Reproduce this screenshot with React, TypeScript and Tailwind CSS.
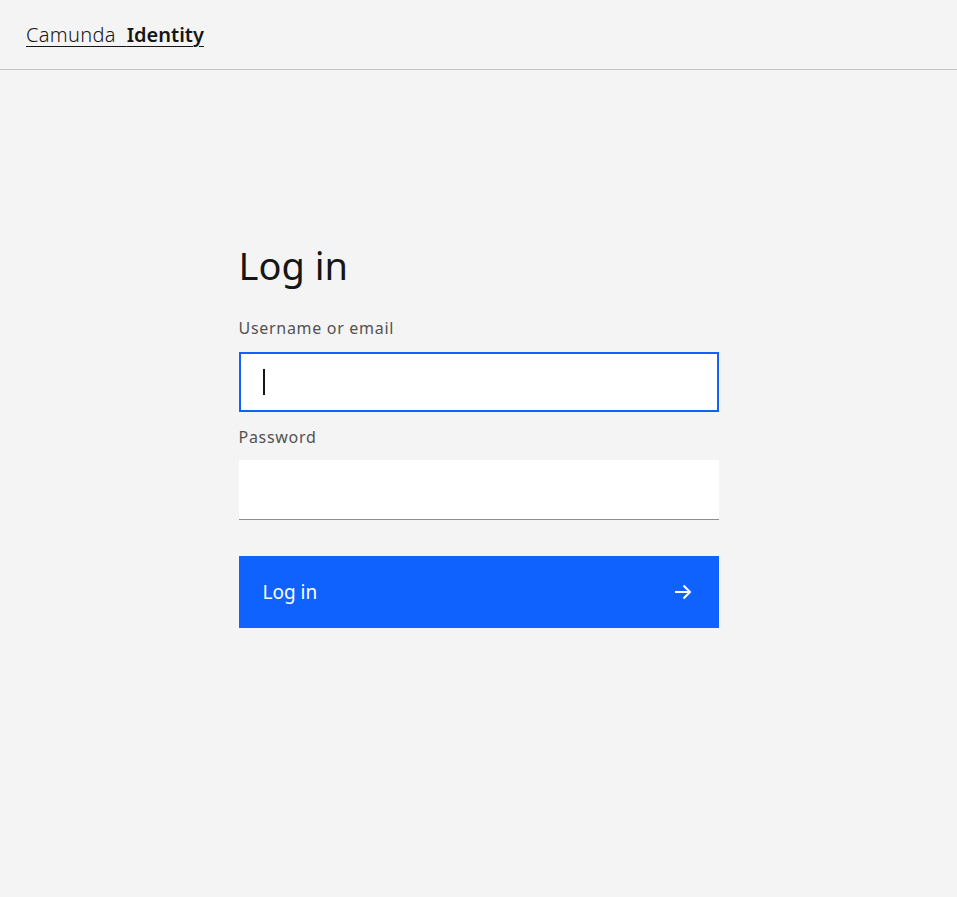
import React from "react";

export default function App() {
  return (
    <div className="min-h-screen w-full bg-[#f4f4f4] text-[#161616]" style={{ fontFamily: '"Noto Sans", "Open Sans", sans-serif' }}>
      <header className="h-[70px] border-b border-[#c6c6c6] flex items-center pl-[26px]">
        <a href="#" className="text-[20px] leading-none underline underline-offset-[4px] decoration-1 text-[#161616] whitespace-pre">
          <span className="font-light tracking-[0.3px]">Camunda  </span>
          <span className="font-semibold">Identity</span>
        </a>
      </header>
      <main className="flex justify-center pt-[172px]">
        <div className="w-[480px] flex flex-col">
          <h1 className="text-[38px] leading-[46px] font-normal text-[#161616] mb-[31px]">Log in</h1>
          <label className="text-[16px] leading-[18px] text-[#525252] tracking-[0.7px] mb-[15px]">Username or email</label>
          <div className="h-[60px] bg-white border-2 border-[#0f62fe] flex items-center pl-[22px]">
            <span className="block w-[2px] h-[26px] bg-[#161616]" />
          </div>
          <label className="text-[16px] leading-[18px] text-[#525252] tracking-[0.7px] mt-[16px] mb-[14px]">Password</label>
          <div className="h-[60px] bg-white border-b border-[#8d8d8d]" />
          <button className="mt-[36px] h-[72px] bg-[#0f62fe] text-white flex items-center justify-between pl-[24px] pr-[27px] text-[19px]">
            <span>Log in</span>
            <svg width="18" height="18" viewBox="0 0 18 18" fill="none" stroke="white" strokeWidth="2">
              <path d="M1 9H16M9.5 2.5L16 9L9.5 15.5" />
            </svg>
          </button>
        </div>
      </main>
    </div>
  );
}
